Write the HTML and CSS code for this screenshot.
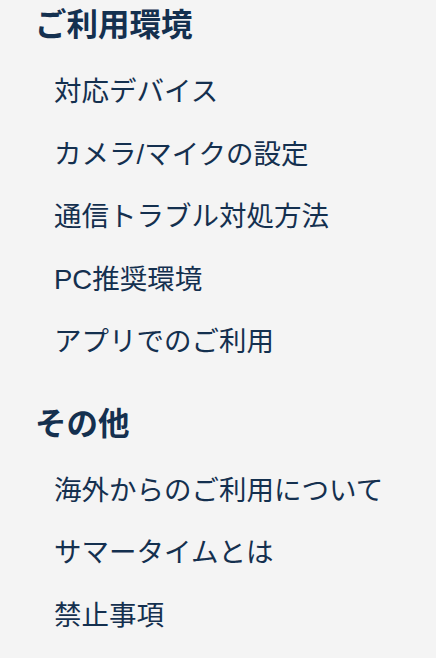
FILE: index.html
```html
<!doctype html>
<html lang="ja">
<head>
	<meta charset="utf-8">
	<title>ヘルプ</title>
	<link rel="stylesheet" href="styles.css">
</head>
<body>
	<div class="menu">
		<div class="section">
			<h2 class="section-title">ご利用環境</h2>
			<ul class="links">
				<li><a href="#">対応デバイス</a></li>
				<li><a href="#">カメラ/マイクの設定</a></li>
				<li><a href="#">通信トラブル対処方法</a></li>
				<li><a href="#">PC推奨環境</a></li>
				<li><a href="#">アプリでのご利用</a></li>
			</ul>
		</div>
		<div class="section">
			<h2 class="section-title">その他</h2>
			<ul class="links">
				<li><a href="#">海外からのご利用について</a></li>
				<li><a href="#">サマータイムとは</a></li>
				<li><a href="#">禁止事項</a></li>
			</ul>
		</div>
	</div>
</body>
</html>
```

FILE: styles.css
```css
* {margin:0; padding:0; box-sizing:border-box;}
html, body {background:#f4f4f4;}
body {font-family:"Liberation Sans","Noto Sans CJK JP",sans-serif; color:#14304f;}

.menu {padding:3px 0 0 35px;}
.section + .section {margin-top:30px;}

.section-title {font-size:31.5px; line-height:45px; font-weight:bold; margin-bottom:11px;}

.links {list-style:none; padding-left:19px;}
.links li {padding:13px 0 9px; font-size:27.5px; line-height:40.5px;}
.links a {color:#14304f; text-decoration:none;}
```
